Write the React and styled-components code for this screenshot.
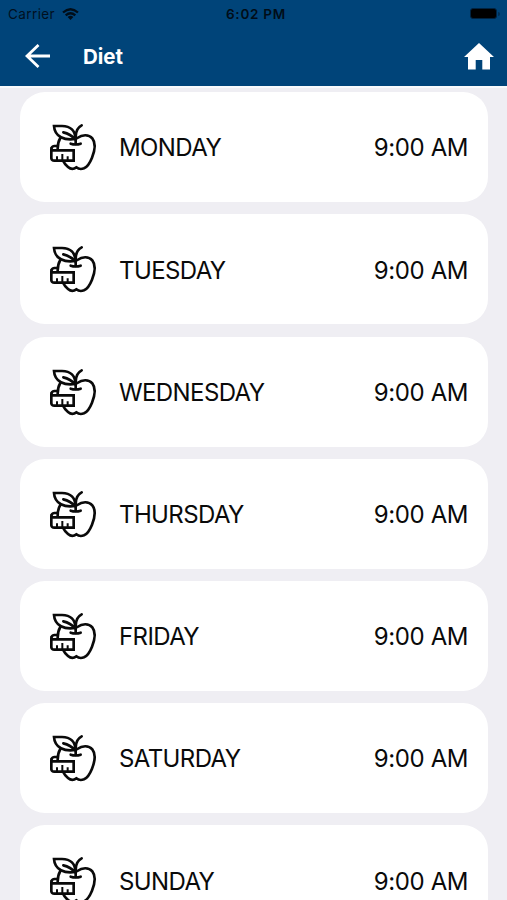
import React from "react";
import styled, { createGlobalStyle } from "styled-components";

const days = [
  "MONDAY",
  "TUESDAY",
  "WEDNESDAY",
  "THURSDAY",
  "FRIDAY",
  "SATURDAY",
  "SUNDAY",
];

const AppleIcon = () => (
  <IconBox viewBox="0 0 192 192">
    {/* leaf */}
    <path d="M42 33 H66 C92 33 106 48 106 72 C74 77 44 66 42 33 Z" />
    <path d="M70 52 C84 55 98 64 107 74" />
    {/* stem */}
    <path d="M107 87 V66 C107 48 113 37 125 31" />
    <path d="M92 86 Q107 91 122 86" />
    {/* apple */}
    <path d="M112 69 C126 59 146 57 157 70 C168 84 164 108 156 128 C150 143 143 155 132 160 C122 164 115 162 109 157 C101 163 91 162 84 156 C78 151 73 146 70 139" />
    <path d="M61 69 C56 77 53 88 53 101" />
    {/* tape */}
    <path d="M53 93 H43 Q34 94 34 103 V130 Q35 137 43 137 H101 V106 H40 Q34 106 34 99" />
    <path
      strokeWidth="6"
      strokeLinecap="butt"
      d="M51 137 V124 M67 137 V117 M83 137 V124"
    />
  </IconBox>
);

export default function App() {
  return (
    <>
      <GlobalStyle />
      <Screen>
        <Header>
          <StatusBar>
            <Carrier>
              Carrier
              <svg width="17" height="12" viewBox="0 0 17 12">
                <g fill="none" stroke="#000d18" strokeWidth="2.3">
                  <path d="M1 4.5 Q8.5 -2 16 4.5" />
                  <path d="M3.7 7.4 Q8.5 3.2 13.3 7.4" />
                </g>
                <path d="M5.6 9 Q8.5 6.6 11.4 9 L8.5 12 Z" fill="#000d18" />
              </svg>
            </Carrier>
            <Clock>6:02 PM</Clock>
            <Battery />
          </StatusBar>
          <NavBar>
            <BackIcon viewBox="0 0 26 24">
              <path d="M13.5 1 L2 12 L13.5 23 M2 12 H25" />
            </BackIcon>
            <Title>Diet</Title>
            <HomeIcon viewBox="0 0 30 27">
              <path d="M15 0 L30 14 H26 V26.5 H18.3 V17 H11.7 V26.5 H4 V14 H0 Z" />
            </HomeIcon>
          </NavBar>
        </Header>
        <DayList>
          {days.map((day) => (
            <DayCard key={day}>
              <AppleIcon />
              <DayName>{day}</DayName>
              <Time>9:00 AM</Time>
            </DayCard>
          ))}
        </DayList>
      </Screen>
    </>
  );
}

const GlobalStyle = createGlobalStyle`
  * {
    box-sizing: border-box;
  }

  body {
    margin: 0;
    background: #efeef3;
    font-family: Inter, "Liberation Sans", sans-serif;
  }
`;

const Screen = styled.div`
  height: 900px;
  overflow: hidden;
  display: flex;
  flex-direction: column;
`;

const Header = styled.header`
  flex: none;
  height: 88px;
  background: #004479;
  border-bottom: 2px solid #f8fafc;
`;

const StatusBar = styled.div`
  height: 27px;
  padding: 0 9px 0 8px;
  display: grid;
  grid-template-columns: 1fr auto 1fr;
  align-items: center;
  color: #000d18;
`;

const Carrier = styled.div`
  display: flex;
  align-items: center;
  gap: 7px;
  font-size: 13.5px;
  letter-spacing: 0.4px;
  color: #00101f;
`;

const Clock = styled.div`
  padding-left: 6px;
  font-size: 13.5px;
  font-weight: 600;
  letter-spacing: 0.75px;
`;

const Battery = styled.div`
  justify-self: end;
  position: relative;
  width: 27px;
  height: 11px;
  margin-right: 1px;
  background: #000;
  border: 1px solid #002341;
  border-radius: 3px;

  &::after {
    content: "";
    position: absolute;
    top: 3px;
    right: -4px;
    width: 2px;
    height: 4px;
    border-radius: 0 2px 2px 0;
    background: #002f55;
  }
`;

const NavBar = styled.nav`
  height: 58px;
  padding: 0 13px 0 25px;
  display: flex;
  align-items: center;
`;

const BackIcon = styled.svg`
  width: 26px;
  height: 24px;
  fill: none;
  stroke: #fff;
  stroke-width: 2.8;
`;

const Title = styled.h1`
  flex: 1;
  margin: 0 0 0 32px;
  color: #fff;
  font-size: 20.5px;
  font-weight: 700;
`;

const HomeIcon = styled.svg`
  width: 30px;
  height: 27px;
  fill: #fff;
`;

const DayList = styled.main`
  padding: 4.3px 19.4px 0 20.2px;
  display: flex;
  flex-direction: column;
  gap: 12.2px;
`;

const DayCard = styled.div`
  flex: none;
  height: 110px;
  padding: 0 19.5px 0 19.8px;
  display: flex;
  align-items: center;
  background: #fff;
  border-radius: 25px;
  color: #0a0a0a;
  font-size: 24px;
  line-height: 30px;
`;

const IconBox = styled.svg`
  flex: none;
  width: 64px;
  height: 64px;
  fill: none;
  stroke: #0a0a0a;
  stroke-width: 8;
  stroke-linejoin: miter;
  stroke-linecap: round;
`;

const DayName = styled.div`
  flex: 1;
  margin-left: 15px;
  padding-top: 2.3px;
  letter-spacing: -0.6px;
`;

const Time = styled.div`
  padding-top: 2.3px;
  letter-spacing: -0.4px;
`;
